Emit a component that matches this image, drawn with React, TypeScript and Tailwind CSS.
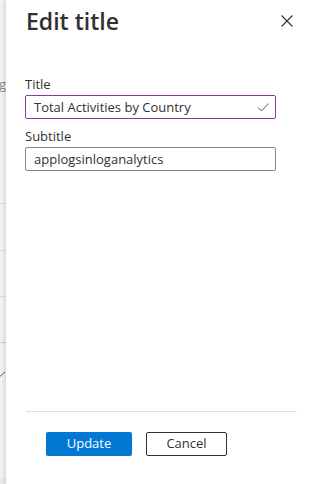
import React from "react";

const FONT = { fontFamily: '"Open Sans", "Noto Sans", Arial, sans-serif' };

function BackgroundStrip() {
  return (
    <div className="flex w-[6px] shrink-0 flex-col overflow-hidden bg-[#f4f4f4] text-[#8a8886]">
      <div className="h-[76px]" />
      <div className="flex h-[16px] justify-end whitespace-nowrap text-[13px] leading-[16px]">g</div>
      <div className="h-[112px] border-b border-[#dcdcdc]" />
      <div className="h-[47px] border-b border-[#dcdcdc]" />
      <div className="h-[46px] border-b border-[#dcdcdc]" />
      <div className="h-[46px] border-b border-[#c5cde3]" />
      <div className="flex h-[64px] items-center justify-end">
        <svg width="10" height="12" viewBox="0 0 10 12" className="shrink-0" fill="none" stroke="#605e5c" strokeWidth="1">
          <path d="M1 10 L9 3" />
          <path d="M1 10 L1 6.5" />
        </svg>
      </div>
      <div className="flex-1" />
      <div className="h-[5px] bg-[#ebebeb]" />
    </div>
  );
}

function Field({
  label,
  value,
  focused,
}: {
  label: string;
  value: string;
  focused?: boolean;
}) {
  return (
    <div className="flex flex-col">
      <label className="text-[13px] leading-[20px] text-[#323130]">{label}</label>
      <div
        className={`mt-[1px] flex h-[24px] items-center rounded-[2px] border pl-[8px] pr-[6px] ${
          focused ? "border-[#8a36a6]" : "border-[#8a8886]"
        }`}
      >
        <span className="flex-1 truncate text-[13px] leading-[20px] text-[#323130]">{value}</span>
        {focused && (
          <svg width="12" height="12" viewBox="0 0 12 12" fill="none" stroke="#605e5c" strokeWidth="1">
            <path d="M1 6.5 L4.5 10 L11.5 2.5" />
          </svg>
        )}
      </div>
    </div>
  );
}

export default function App() {
  return (
    <div className="flex h-[484px] w-[317px] overflow-hidden bg-white" style={FONT}>
      <BackgroundStrip />
      <div className="flex flex-1 flex-col bg-white shadow-[-2px_0_4px_rgba(0,0,0,0.12)]">
        <div className="flex items-start justify-between pl-[20px] pr-[24px] pt-[4px]">
          <h1 className="text-[23px] font-semibold leading-[34px] text-[#323130]">Edit title</h1>
          <button type="button" aria-label="Close" className="mt-[11px] p-0">
            <svg width="12" height="12" viewBox="0 0 12 12" stroke="#323130" strokeWidth="1.1">
              <path d="M0.5 0.5 L11.5 11.5 M11.5 0.5 L0.5 11.5" />
            </svg>
          </button>
        </div>

        <div className="mt-[36px] flex w-[270px] flex-col gap-[7px] pl-[19px]">
          <Field label="Title" value="Total Activities by Country" focused />
          <Field label="Subtitle" value="applogsinloganalytics" />
        </div>

        <div className="flex-1" />

        <div className="mx-[20px] border-t border-[#e1dfdd]" />
        <div className="flex gap-[14px] pb-[28px] pl-[40px] pt-[20px]">
          <button
            type="button"
            className="h-[24px] w-[86px] rounded-[2px] bg-[#0078d4] text-[13px] text-white"
          >
            Update
          </button>
          <button
            type="button"
            className="h-[24px] w-[81px] rounded-[2px] border border-[#323130] bg-white text-[13px] text-[#323130]"
          >
            Cancel
          </button>
        </div>
      </div>
    </div>
  );
}
